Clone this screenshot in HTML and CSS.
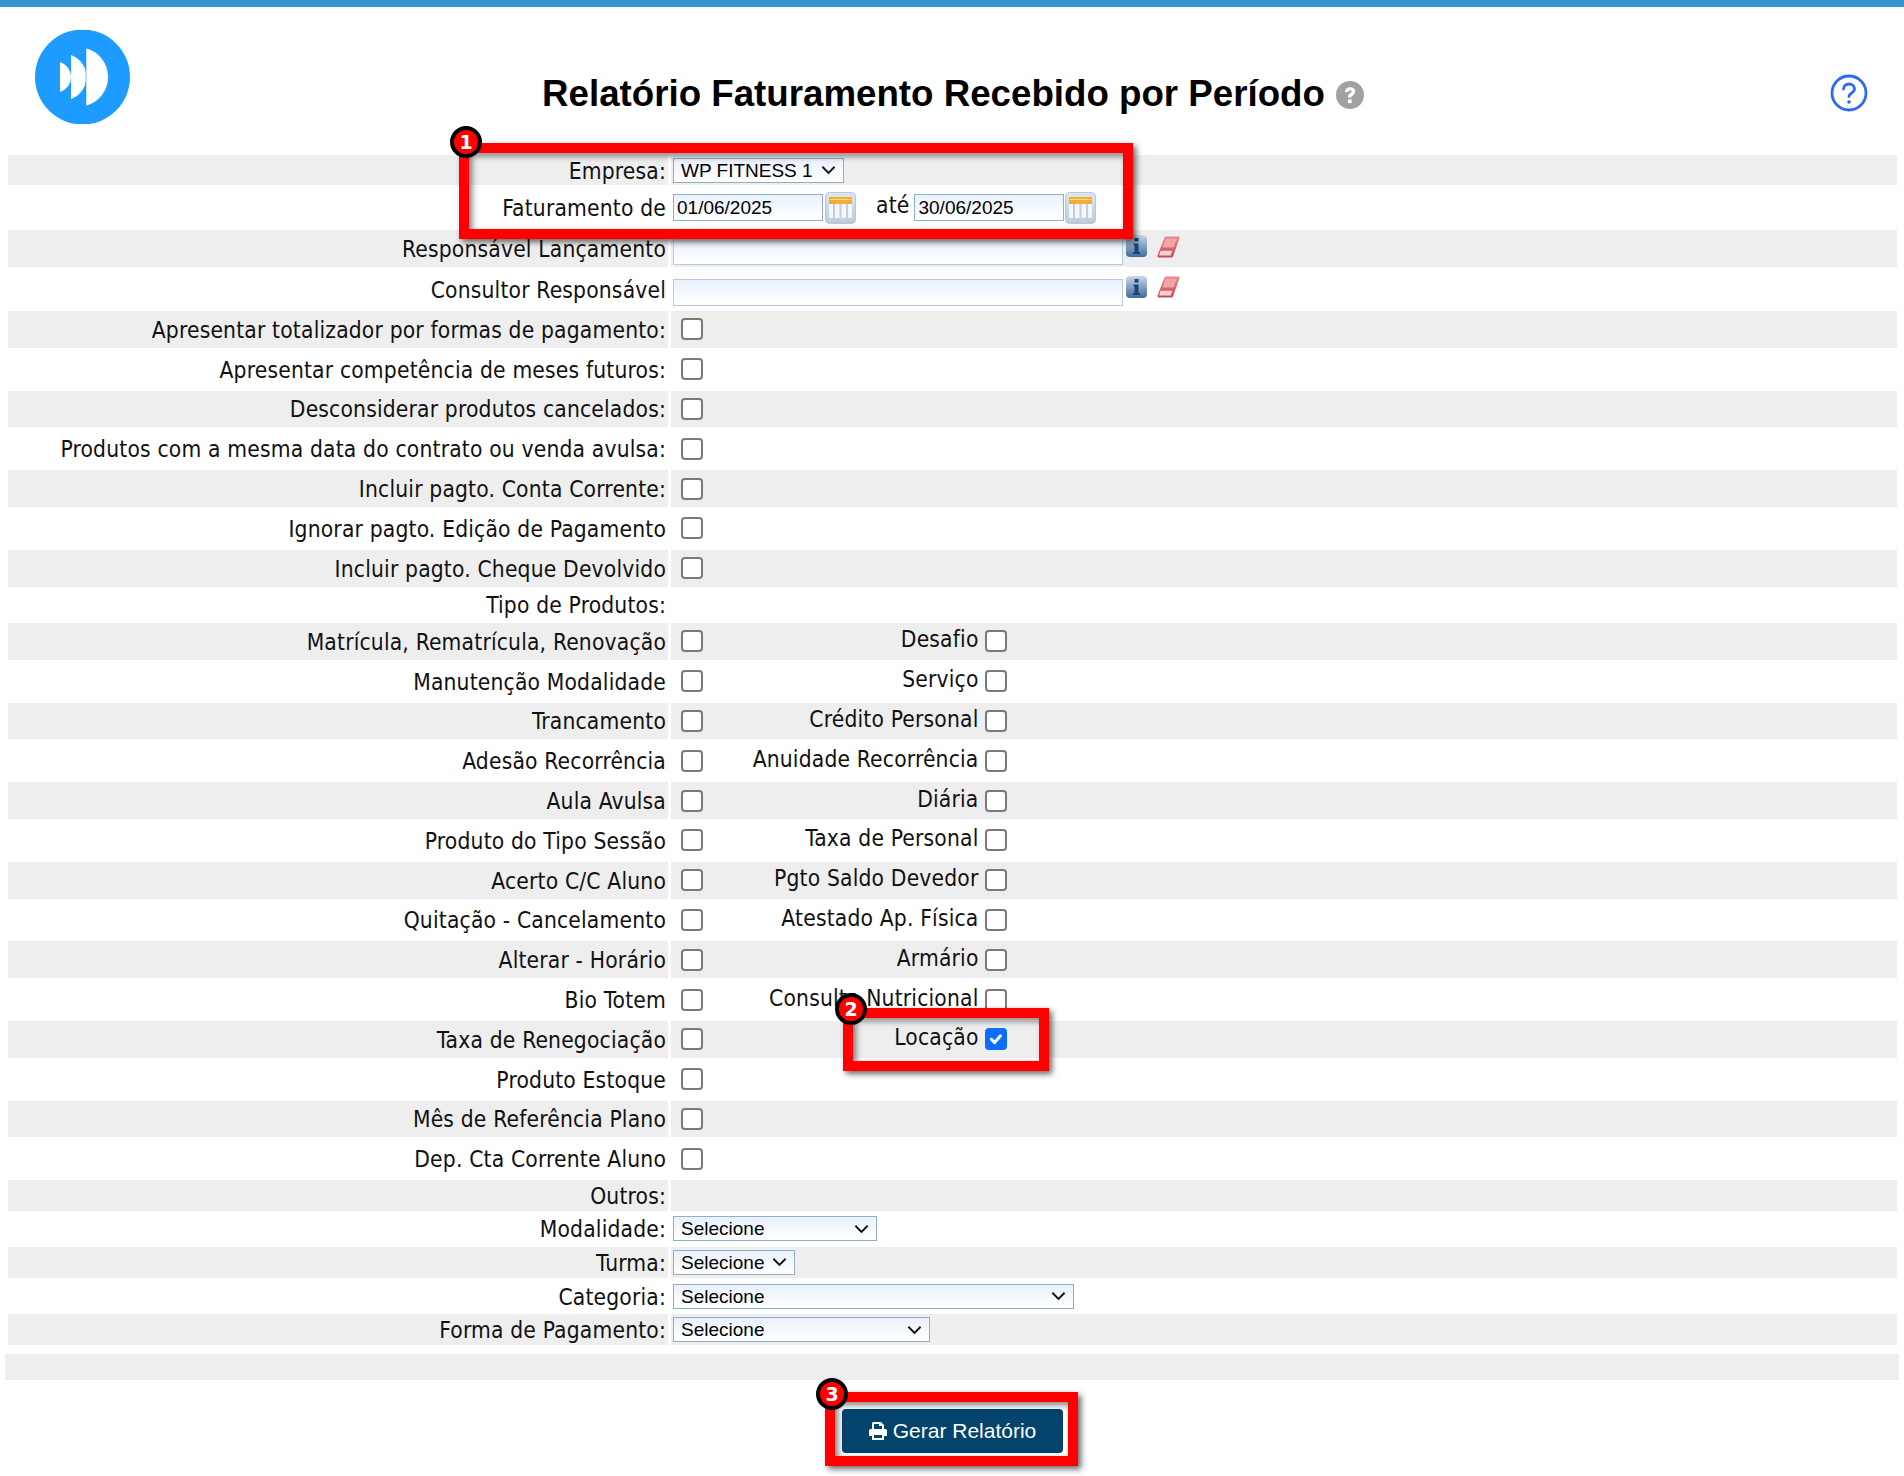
FILE: index.html
```html
<!DOCTYPE html>
<html lang="pt-BR">
<head>
<meta charset="utf-8">
<title>Relatório Faturamento Recebido por Período</title>
<link rel="stylesheet" href="styles.css">
</head>
<body>
<div class="topbar"></div>
<header class="header">
  <svg class="logo" viewBox="35 30 95 94" aria-hidden="true">
    <circle cx="82.5" cy="77" r="47.5" fill="#1e9bff"/>
    <path d="M60 62A15.7 15.7 0 0 1 60 92Z" fill="#fff"/>
    <path d="M71 55A23.4 23.4 0 0 1 71 99Z" fill="#fff"/>
    <path d="M86 48A30 30 0 0 1 86 106Z" fill="#fff" stroke="#1e9bff" stroke-width=".6"/>
  </svg>
  <div class="title-wrap">
    <h1 class="title">Relatório Faturamento Recebido por Período</h1>
    <svg class="title-help" viewBox="0 0 28 28" aria-hidden="true">
      <circle cx="14" cy="14" r="14" fill="#a2a2a2"/>
      <path d="M9 11c0-3 2.300-4.700 5.200-4.700 2.800 0 5 1.700 5 4.200 0 2-1.100 3-2.500 3.900-.9.600-1.200 1-1.200 2H12c0-2.200.7-3.200 2-4 1-.7 1.600-1.100 1.600-1.900 0-.8-.6-1.300-1.500-1.300-1 0-1.600.6-1.700 1.800z" fill="#fff"/>
      <rect x="12" y="18.500" width="3.600" height="3.600" fill="#fff"/>
    </svg>
  </div>
  <svg class="page-help" viewBox="0 0 38 38" aria-hidden="true">
    <circle cx="19" cy="19" r="17" fill="none" stroke="#2a6af5" stroke-width="2.800"/>
    <path d="M13.500 15c0-3 2.500-5 5.500-5s5.500 2 5.500 4.800c0 2.400-1.500 3.400-3 4.400-1.300.9-2.500 1.500-2.500 3.300" fill="none" stroke="#2a6af5" stroke-width="2.800" stroke-linecap="round"/>
    <circle cx="19" cy="28" r="1.800" fill="#2a6af5"/>
  </svg>
</header>

<main class="form">
  <div class="row row-first">
    <div class="cell label">Empresa:</div>
    <div class="cell field">
      <select class="sel sel-empresa"><option>WP FITNESS 1</option></select>
    </div>
  </div>
  <div class="row row-period">
    <div class="cell label">Faturamento de</div>
    <div class="cell field">
      <input class="txt date" type="text" value="01/06/2025">
      <svg class="cal" viewBox="0 0 31 32" aria-hidden="true"><use href="#cal-icon"/></svg>
      <span class="ate">até</span>
      <input class="txt date" type="text" value="30/06/2025">
      <svg class="cal cal-end" viewBox="0 0 31 32" aria-hidden="true"><use href="#cal-icon"/></svg>
    </div>
  </div>
  <div class="row">
    <div class="cell label">Responsável Lançamento</div>
    <div class="cell field">
      <input class="txt person" type="text">
      <svg class="info" viewBox="0 0 23 23" aria-hidden="true"><use href="#info-icon"/></svg>
      <svg class="eraser" viewBox="0 0 23 21" preserveAspectRatio="none" aria-hidden="true"><use href="#eraser-icon"/></svg>
    </div>
  </div>
  <div class="row row-cons">
    <div class="cell label">Consultor Responsável</div>
    <div class="cell field">
      <input class="txt person" type="text">
      <svg class="info" viewBox="0 0 23 23" aria-hidden="true"><use href="#info-icon"/></svg>
      <svg class="eraser" viewBox="0 0 23 21" preserveAspectRatio="none" aria-hidden="true"><use href="#eraser-icon"/></svg>
    </div>
  </div>
  <div class="row"><div class="cell label">Apresentar totalizador por formas de pagamento:</div><div class="cell field"><input class="check" type="checkbox"></div></div>
  <div class="row"><div class="cell label">Apresentar competência de meses futuros:</div><div class="cell field"><input class="check" type="checkbox"></div></div>
  <div class="row"><div class="cell label">Desconsiderar produtos cancelados:</div><div class="cell field"><input class="check" type="checkbox"></div></div>
  <div class="row"><div class="cell label">Produtos com a mesma data do contrato ou venda avulsa:</div><div class="cell field"><input class="check" type="checkbox"></div></div>
  <div class="row"><div class="cell label">Incluir pagto. Conta Corrente:</div><div class="cell field"><input class="check" type="checkbox"></div></div>
  <div class="row"><div class="cell label">Ignorar pagto. Edição de Pagamento</div><div class="cell field"><input class="check" type="checkbox"></div></div>
  <div class="row"><div class="cell label">Incluir pagto. Cheque Devolvido</div><div class="cell field"><input class="check" type="checkbox"></div></div>
  <div class="row row-section"><div class="cell label">Tipo de Produtos:</div><div class="cell field"></div></div>

  <div class="row"><div class="cell label">Matrícula, Rematrícula, Renovação</div><div class="cell field"><input class="check" type="checkbox"><span class="label2">Desafio</span><input class="check check2" type="checkbox"></div></div>
  <div class="row"><div class="cell label">Manutenção Modalidade</div><div class="cell field"><input class="check" type="checkbox"><span class="label2">Serviço</span><input class="check check2" type="checkbox"></div></div>
  <div class="row"><div class="cell label">Trancamento</div><div class="cell field"><input class="check" type="checkbox"><span class="label2">Crédito Personal</span><input class="check check2" type="checkbox"></div></div>
  <div class="row"><div class="cell label">Adesão Recorrência</div><div class="cell field"><input class="check" type="checkbox"><span class="label2">Anuidade Recorrência</span><input class="check check2" type="checkbox"></div></div>
  <div class="row"><div class="cell label">Aula Avulsa</div><div class="cell field"><input class="check" type="checkbox"><span class="label2">Diária</span><input class="check check2" type="checkbox"></div></div>
  <div class="row"><div class="cell label">Produto do Tipo Sessão</div><div class="cell field"><input class="check" type="checkbox"><span class="label2">Taxa de Personal</span><input class="check check2" type="checkbox"></div></div>
  <div class="row"><div class="cell label">Acerto C/C Aluno</div><div class="cell field"><input class="check" type="checkbox"><span class="label2">Pgto Saldo Devedor</span><input class="check check2" type="checkbox"></div></div>
  <div class="row"><div class="cell label">Quitação - Cancelamento</div><div class="cell field"><input class="check" type="checkbox"><span class="label2">Atestado Ap. Física</span><input class="check check2" type="checkbox"></div></div>
  <div class="row"><div class="cell label">Alterar - Horário</div><div class="cell field"><input class="check" type="checkbox"><span class="label2">Armário</span><input class="check check2" type="checkbox"></div></div>
  <div class="row"><div class="cell label">Bio Totem</div><div class="cell field"><input class="check" type="checkbox"><span class="label2">Consulta Nutricional</span><input class="check check2" type="checkbox"></div></div>
  <div class="row"><div class="cell label">Taxa de Renegociação</div><div class="cell field"><input class="check" type="checkbox"><span class="label2">Locação</span><input class="check check2" type="checkbox" checked></div></div>
  <div class="row"><div class="cell label">Produto Estoque</div><div class="cell field"><input class="check" type="checkbox"></div></div>
  <div class="row"><div class="cell label">Mês de Referência Plano</div><div class="cell field"><input class="check" type="checkbox"></div></div>
  <div class="row"><div class="cell label">Dep. Cta Corrente Aluno</div><div class="cell field"><input class="check" type="checkbox"></div></div>

  <div class="row row-section"><div class="cell label">Outros:</div><div class="cell field"></div></div>
  <div class="row row-select"><div class="cell label">Modalidade:</div><div class="cell field"><select class="sel sel-mod"><option>Selecione</option></select></div></div>
  <div class="row row-select"><div class="cell label">Turma:</div><div class="cell field"><select class="sel sel-turma"><option>Selecione</option></select></div></div>
  <div class="row row-select"><div class="cell label">Categoria:</div><div class="cell field"><select class="sel sel-cat"><option>Selecione</option></select></div></div>
  <div class="row row-select"><div class="cell label">Forma de Pagamento:</div><div class="cell field"><select class="sel sel-forma"><option>Selecione</option></select></div></div>
</main>

<div class="footer-strip"></div>
<div class="actions">
  <button class="btn" type="button">
    <svg class="btn-icon" viewBox="0 0 20 20" aria-hidden="true">
      <path d="M4 8V2.500A1.500 1.500 0 0 1 5.500 1H13l3 3v4h-2V5h-3V3H6v5zM2.500 8h15A1.500 1.500 0 0 1 19 9.500V15h-3v4H4v-4H1V9.500A1.500 1.500 0 0 1 2.500 8zM6 14v3h8v-3z" fill="#fff" fill-rule="evenodd"/>
    </svg>
    Gerar Relatório
  </button>
</div>

<div class="mark mark-1"></div>
<div class="mark mark-2"></div>
<div class="mark mark-3"></div>
<span class="badge badge-1">1</span>
<span class="badge badge-2">2</span>
<span class="badge badge-3">3</span>

<svg class="defs" aria-hidden="true">
  <defs>
    <linearGradient id="cal-bg" x1="0" y1="0" x2="0" y2="1"><stop offset="0" stop-color="#dfe8f1"/><stop offset="1" stop-color="#b9cbdc"/></linearGradient>
    <linearGradient id="info-bg" x1="0" y1="0" x2="0" y2="1"><stop offset="0" stop-color="#c9d8e8"/><stop offset=".55" stop-color="#7c9cc0"/><stop offset="1" stop-color="#3f6a9c"/></linearGradient>
    <linearGradient id="er-bg" x1="0" y1="0" x2="0" y2="1"><stop offset="0" stop-color="#e88a8f"/><stop offset="1" stop-color="#c9474e"/></linearGradient>
    <symbol id="cal-icon" viewBox="0 0 31 32">
      <rect x=".5" y=".5" width="30" height="31" rx="4" fill="url(#cal-bg)" stroke="#b7c7d6"/>
      <rect x="4" y="5" width="23" height="21" fill="#f4f6f8"/>
      <rect x="4" y="5" width="23" height="7" fill="#f3ae2f"/>
      <rect x="5" y="7" width="21" height="1" fill="#fbd983"/>
      <path d="M9 12v14M15.500 12v14M22 12v14" stroke="#c2cdd7" stroke-width="2"/>
    </symbol>
    <symbol id="info-icon" viewBox="0 0 23 23">
      <rect x="1" y="0" width="21" height="22" rx="4" fill="url(#info-bg)"/>
      <rect x="9.500" y="3" width="4" height="3.500" fill="#1d4474"/>
      <path d="M8.500 8.500h5v8.500h1.500v2h-7v-2h1.500v-6.500h-1z" fill="#1d4474"/>
    </symbol>
    <symbol id="eraser-icon" viewBox="0 0 23 21">
      <path d="M7.500 1.500A2 2 0 0 1 9.300.5H21a1.500 1.500 0 0 1 1.400 2L16 19.500a2 2 0 0 1-1.800 1H2a1.500 1.500 0 0 1-1.400-2z" fill="url(#er-bg)"/>
      <path d="M3.500 14h11.800l-1.500 4.500H2z" fill="#f7d3d3"/>
      <path d="M8.500 2.500H20L16.500 11H5.500z" fill="#f0a5a8"/>
    </symbol>
  </defs>
</svg>
</body>
</html>
```

FILE: styles.css
```css
* { box-sizing: border-box; }

html, body {
  margin: 0;
  padding: 0;
  background: #fff;
}

body {
  position: relative;
  width: 1904px;
  height: 1476px;
  overflow: hidden;
  font-family: "DejaVu Sans", Verdana, sans-serif;
  color: #111;
}

.topbar {
  height: 7px;
  background: #3295d0;
}

.header {
  display: grid;
  grid-template-columns: 1fr auto 1fr;
  align-items: center;
  height: 148px;
  padding: 0 36px 0 35px;
}

.logo {
  width: 95px;
  height: 94px;
  margin-top: -9px;
}

.title-wrap {
  display: flex;
  align-items: center;
  gap: 11px;
  padding-left: 3px;
  margin-top: 26px;
}

.title {
  margin: 0;
  font: bold 36.7px/44px "Liberation Sans", Arial, sans-serif;
  color: #000;
  white-space: nowrap;
}

.title-help {
  width: 28px;
  height: 28px;
  margin-top: 2px;
}

.page-help {
  justify-self: end;
  width: 38px;
  height: 38px;
  margin-top: 23px;
}

.form {
  display: flex;
  flex-direction: column;
  gap: 3px;
  padding: 0 7px 0 8px;
}

.row {
  display: grid;
  grid-template-columns: 660px 1fr;
  column-gap: 3px;
  height: 36.8px;
}

.row-first { height: 30px; }
.row-period { height: 39px; }
.row:nth-child(3) { height: 37px; }
.row-cons { height: 38px; }
.row-section { height: 30.4px; }
.row-select { height: 30.6px; }

.row:nth-child(odd) > .cell { background: #eee; }

.cell {
  display: flex;
  align-items: center;
  font-size: 22.6px;
  font-stretch: condensed;
  letter-spacing: .18px;
  white-space: nowrap;
}

.label {
  justify-content: flex-end;
  padding: 1px 2px 0 0;
}

.field { padding-left: 2px; }

.sel {
  appearance: none;
  height: 25px;
  padding: 0 0 0 7px;
  border: 1px solid #8fb0c4;
  border-radius: 0;
  background: url("data:image/svg+xml,%3Csvg xmlns='http://www.w3.org/2000/svg' viewBox='0 0 16 10'%3E%3Cpath fill='none' stroke='%23111' stroke-width='2' d='M1.500 1.500L8 8l6.500-6.500'/%3E%3C/svg%3E") right 7px center / 15px 10px no-repeat, linear-gradient(#eaf1fc, #fff);
  font: 19px "Liberation Sans", Arial, sans-serif;
  color: #000;
}

.sel-empresa { width: 171px; }
.sel-mod { width: 204px; }
.sel-turma { width: 122px; }
.sel-cat { width: 401px; }
.sel-forma { width: 257px; }

.txt {
  height: 27px;
  padding: 0 3px;
  border: 1px solid #8fb0c4;
  border-radius: 0;
  background: linear-gradient(#eaf1fc, #fff);
  font: 19px "Liberation Sans", Arial, sans-serif;
  color: #000;
}

.date { width: 150px; }
.person { width: 450px; margin-top: 6px; border-color: #b6cbe2; }

.cal {
  width: 31px;
  height: 32px;
  margin-left: 2px;
}

.cal-end { margin-left: 1px; }

.ate {
  margin: 0 5px 6px 20px;
}

.info {
  width: 23px;
  height: 23px;
  margin: -4px 0 0 2px;
}

.eraser {
  width: 23px;
  height: 22px;
  margin: -4px 0 0 9px;
}

.check {
  appearance: none;
  flex: none;
  width: 22px;
  height: 22px;
  margin: 0 0 0 7.500px;
  border: 2px solid #7a7a7a;
  border-radius: 4px;
  background: #fff;
}

.check:checked {
  border-color: #0d6efd;
  background: #0d6efd url("data:image/svg+xml,%3Csvg xmlns='http://www.w3.org/2000/svg' viewBox='0 0 20 20'%3E%3Cpath fill='none' stroke='%23fff' stroke-width='3.4' stroke-linecap='round' stroke-linejoin='round' d='M5 10.500l3.500 3.500L15 6.500'/%3E%3C/svg%3E") center / 100% no-repeat;
}

.check2 { margin-left: 6.500px; }

.label2 {
  width: 276px;
  text-align: right;
  margin-top: -4px;
}

.footer-strip {
  height: 26px;
  margin: 9px 5px 0;
  background: #eee;
}

.actions {
  display: flex;
  justify-content: center;
  padding: 29px 0 0 0;
}

.btn {
  display: flex;
  align-items: center;
  justify-content: center;
  gap: 5px;
  width: 221px;
  height: 44px;
  border: 0;
  border-radius: 4px;
  background: #03436c;
  color: #fff;
  font: 21px "Liberation Sans", Arial, sans-serif;
}

.btn-icon {
  width: 20px;
  height: 20px;
}

.mark {
  position: absolute;
  border: 10px solid #f00;
  box-shadow: 3px 3px 6px rgba(0, 0, 0, .6), inset 3px 3px 6px rgba(0, 0, 0, .5);
}

.mark-1 { left: 459px; top: 143px; width: 674px; height: 96px; }
.mark-2 { left: 843px; top: 1008px; width: 206px; height: 63px; }
.mark-3 { left: 825px; top: 1392px; width: 253px; height: 74px; }

.badge {
  position: absolute;
  display: flex;
  align-items: center;
  justify-content: center;
  width: 32px;
  height: 32px;
  border: 4px solid #000;
  border-radius: 50%;
  background: #f00;
  color: #fff;
  font: bold 19px "DejaVu Sans", sans-serif;
}

.badge-1 { left: 450px; top: 126px; }
.badge-2 { left: 835px; top: 993px; }
.badge-3 { left: 816px; top: 1378px; }

.defs {
  position: absolute;
  width: 0;
  height: 0;
}
```
